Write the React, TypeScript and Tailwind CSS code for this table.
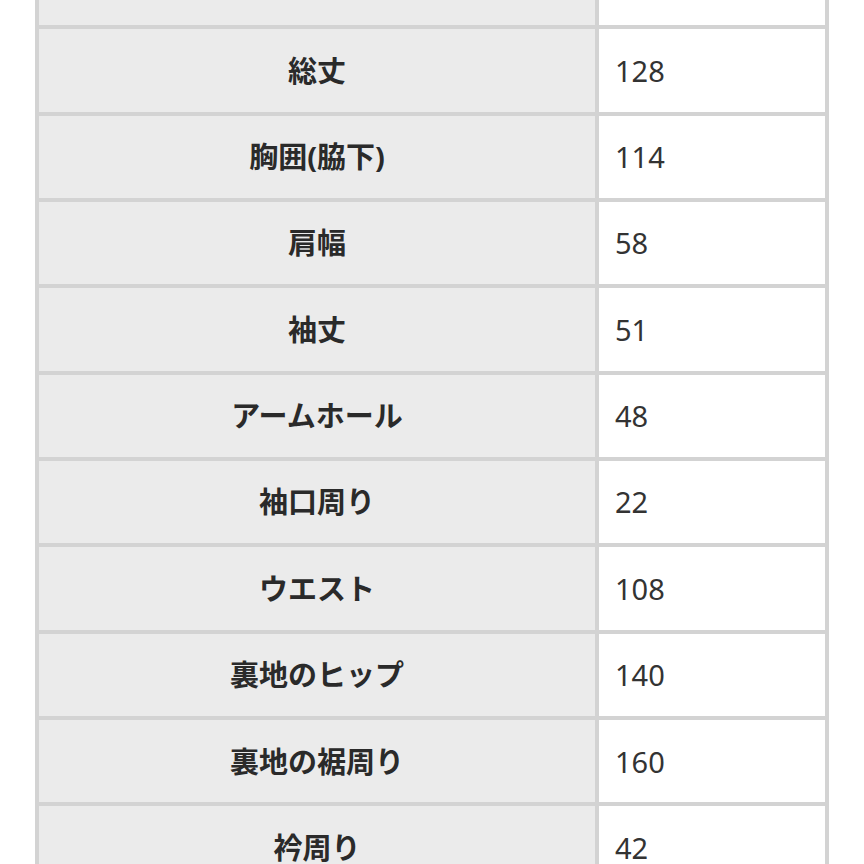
import React from "react";

const rows: [string, string][] = [
  ["", ""],
  ["総丈", "128"],
  ["胸囲(脇下)", "114"],
  ["肩幅", "58"],
  ["袖丈", "51"],
  ["アームホール", "48"],
  ["袖口周り", "22"],
  ["ウエスト", "108"],
  ["裏地のヒップ", "140"],
  ["裏地の裾周り", "160"],
  ["衿周り", "42"],
];

export default function App() {
  return (
    <div className="h-[864px] overflow-hidden bg-white">
      <table className="ml-[35px] mt-[-61px] border-separate border-spacing-1 bg-[#d3d3d3] font-['Noto_Sans','Noto_Sans_CJK_JP',sans-serif] text-[29px] text-[#333]">
        <tbody>
          {rows.map(([label, value], i) => (
            <tr key={i}>
              <th className="h-[82.35px] w-[556px] bg-[#ebebeb] p-0 text-center font-bold text-[#2a2a2a]">
                {label}
              </th>
              <td className="h-[82.35px] w-[226px] bg-white py-0 pl-[16px] text-left font-normal">
                {value}
              </td>
            </tr>
          ))}
        </tbody>
      </table>
    </div>
  );
}
